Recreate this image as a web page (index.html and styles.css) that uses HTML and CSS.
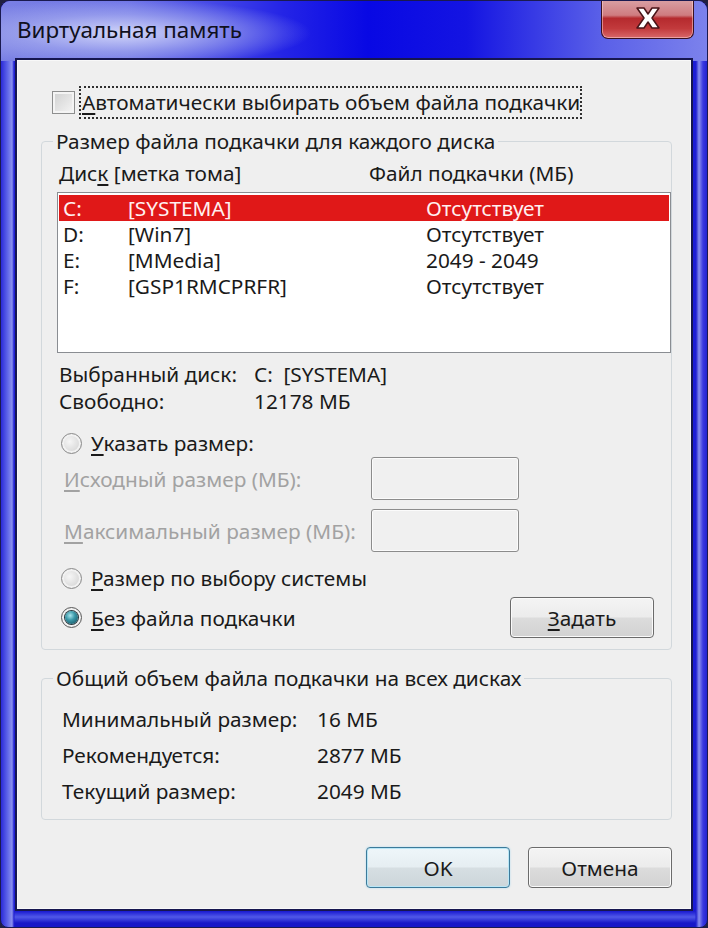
FILE: index.html
```html
<!DOCTYPE html>
<html lang="ru">
<head>
<meta charset="utf-8">
<title>Виртуальная память</title>
<link rel="stylesheet" href="styles.css">
</head>
<body>
<div class="window">
  <div class="titlebar">
    <div class="title">Виртуальная память</div>
    <div class="close">
      <svg width="30" height="24" viewBox="0 0 30 24" aria-hidden="true">
        <path d="M4 2 H11 L15 8 L19 2 H26 L19 12 L26 22 H19 L15 16 L11 22 H4 L11 12 Z" fill="#ffffff" stroke="#4a1418" stroke-width="1.5" stroke-linejoin="round"/>
      </svg>
    </div>
  </div>
  <div class="client">
    <div class="auto-row">
      <span class="checkbox"></span>
      <span class="focus"><u>А</u>втоматически выбирать объем файла подкачки</span>
    </div>

    <fieldset class="group group-disks">
      <legend>Размер файла подкачки для каждого диска</legend>
      <div class="list-head">
        <span class="col-disk">Дис<u>к</u> [метка тома]</span>
        <span class="col-file">Файл подкачки (МБ)</span>
      </div>
      <div class="listbox">
        <div class="lrow selected"><span class="c1">C:</span><span class="c2">[SYSTEMA]</span><span class="c3">Отсутствует</span></div>
        <div class="lrow"><span class="c1">D:</span><span class="c2">[Win7]</span><span class="c3">Отсутствует</span></div>
        <div class="lrow"><span class="c1">E:</span><span class="c2">[MMedia]</span><span class="c3">2049 - 2049</span></div>
        <div class="lrow"><span class="c1">F:</span><span class="c2">[GSP1RMCPRFR]</span><span class="c3">Отсутствует</span></div>
      </div>
      <div class="info">
        <div class="irow"><span class="ilabel">Выбранный диск:</span><span>C:&nbsp;&nbsp;[SYSTEMA]</span></div>
        <div class="irow"><span class="ilabel">Свободно:</span><span>12178 МБ</span></div>
      </div>
      <div class="radio-row first"><span class="radio"></span><span><u>У</u>казать размер:</span></div>
      <div class="size-row s1"><span class="size-label"><u>И</u>сходный размер (МБ):</span><span class="textbox"></span></div>
      <div class="size-row s2"><span class="size-label"><u>М</u>аксимальный размер (МБ):</span><span class="textbox"></span></div>
      <div class="radio-row sys"><span class="radio"></span><span><u>Р</u>азмер по выбору системы</span></div>
      <div class="radio-row none">
        <span class="radio checked"></span><span><u>Б</u>ез файла подкачки</span>
        <span class="btn set"><u>З</u>адать</span>
      </div>
    </fieldset>

    <fieldset class="group group-total">
      <legend>Общий объем файла подкачки на всех дисках</legend>
      <div class="trow first"><span class="tlabel">Минимальный размер:</span><span>16 МБ</span></div>
      <div class="trow"><span class="tlabel">Рекомендуется:</span><span>2877 МБ</span></div>
      <div class="trow"><span class="tlabel">Текущий размер:</span><span>2049 МБ</span></div>
    </fieldset>

    <div class="buttons">
      <span class="btn ok">OK</span>
      <span class="btn">Отмена</span>
    </div>
  </div>
</div>
</body>
</html>
```
FILE: styles.css
```css
html, body {
  margin: 0;
  padding: 0;
  background: #202040;
}
body {
  width: 708px;
  height: 928px;
  overflow: hidden;
  font-family: "Noto Sans", "Open Sans", sans-serif;
  font-size: 20.8px;
  color: #1a1a1a;
}
u { text-decoration-thickness: 2px; text-underline-offset: 3px; }

.window {
  width: 708px;
  height: 928px;
  box-sizing: border-box;
  border-radius: 10px 10px 8px 8px;
  border: 1px solid #1a1a50;
  background:
    linear-gradient(to right, #2a2ad8 0px, #5a60e8 6px, #8a90ee 11px, #2020d0 13px, transparent 14px, transparent 694px, #2020d0 695px, #8a90ee 698px, #3838e0 702px, #1818c8 708px),
    linear-gradient(to bottom, transparent 0, transparent 905px, #1818d0 910px, #5058e8 916px, #1818c8 922px);
  background-color: #1c1cd8;
  display: flex;
  flex-direction: column;
  overflow: hidden;
  position: relative;
}
.window::before {
  content: "";
  position: absolute;
  left: 0; top: 0; right: 0; height: 60px;
  background:
    radial-gradient(ellipse 190px 34px at 120px 32px, rgba(214,218,250,0.95) 0%, rgba(170,176,240,0.6) 55%, rgba(120,126,235,0) 100%),
    linear-gradient(to right, #7a80e4 0%, #6c72e6 18%, #2424e6 40%, #0808e4 52%, #1414e2 66%, #5a60e8 85%, #7c82ec 100%);
  z-index: 0;
}

.titlebar {
  position: relative;
  z-index: 1;
  height: 57px;
  display: flex;
  align-items: flex-start;
  justify-content: space-between;
  padding-left: 16px;
  padding-right: 13px;
}
.title {
  font-size: 22.4px;
  line-height: 26px;
  margin-top: 16px;
  color: #101020;
}
.close {
  width: 93px;
  height: 39px;
  margin-top: -1px;
  box-sizing: border-box;
  border: 1px solid #3a1020;
  border-top: none;
  border-radius: 0 0 7px 7px;
  background: linear-gradient(to bottom, #d9a0a4 0%, #cf7c80 40%, #b52a2e 48%, #c23a3c 75%, #d8686a 100%);
  box-shadow: inset 0 0 0 1px rgba(255,220,220,0.5);
  display: flex;
  align-items: center;
  justify-content: center;
}
.close svg { display: block; margin-top: -2px; }

.client {
  position: relative;
  z-index: 1;
  margin: 0 14px 0 14px;
  height: 853px;
  box-sizing: border-box;
  border: 2px solid #161650;
  background: #efefef;
  box-shadow: inset 0 0 0 1px #f8f8f8;
  padding: 25px 21px 0 24px;
}

.auto-row {
  display: flex;
  align-items: center;
  height: 35px;
  margin-left: 11px;
}
.checkbox {
  width: 23px;
  height: 23px;
  box-sizing: border-box;
  border: 1px solid #8e8f8f;
  background: linear-gradient(135deg, #cfd0d0 0%, #e6e6e6 60%, #f6f6f6 100%);
  box-shadow: inset 0 0 0 2px #f4f4f4;
  margin-right: 4px;
}
.focus {
  border: 2px dotted #303030;
  padding: 0 0 0 1px;
  line-height: 29px;
}

.group {
  margin: 0;
  border: 1px solid #d2d8dc;
  border-radius: 4px;
  box-sizing: border-box;
  width: 631px;
  padding: 0;
}
.group legend {
  padding: 0 3px;
  line-height: 24px;
}
.group-disks {
  margin-top: 9px;
  height: 521px;
  padding: 7px 0 0 15px;
}
.group-disks legend { margin-left: -4px; }
.list-head {
  display: flex;
  line-height: 26px;
  margin-left: 2px;
}
.col-disk { width: 310px; }

.listbox {
  margin-top: 6px;
  width: 614px;
  height: 161px;
  box-sizing: border-box;
  border: 1px solid #8a8d92;
  background: #fff;
  padding: 2px 1px;
}
.lrow {
  display: flex;
  height: 26px;
  line-height: 26px;
  padding-left: 4px;
}
.lrow.selected {
  background: #e01818;
  color: #fff0f0;
}
.c1 { width: 65px; }
.c2 { width: 298px; }

.info { margin-top: 8px; margin-left: 2px; }
.irow { display: flex; line-height: 27px; }
.ilabel { width: 195px; }

.radio-row {
  display: flex;
  align-items: center;
  height: 34px;
  margin-left: 4px;
}
.radio-row.first { margin-top: 11px; }
.radio {
  width: 21px;
  height: 21px;
  box-sizing: border-box;
  border-radius: 50%;
  border: 1px solid #8b8b8b;
  background: radial-gradient(circle at 40% 40%, #f6f6f6 0%, #dcdcdc 60%, #c8c8c8 100%);
  box-shadow: inset 0 0 0 2px #f2f2f2;
  margin-right: 9px;
  position: relative;
}
.radio.checked {
  border-color: #5a5a5a;
}
.radio.checked::after {
  content: "";
  position: absolute;
  left: 3px; top: 3px;
  width: 13px; height: 13px;
  border-radius: 50%;
  background: radial-gradient(circle at 40% 35%, #a8e6ee 0%, #3a98a8 40%, #0e4452 100%);
  box-shadow: 0 0 0 1px #2a3a40;
}

.size-row {
  display: flex;
  align-items: center;
  justify-content: space-between;
  height: 43px;
  width: 455px;
  margin-left: 7px;
  color: #a2a2a2;
}
.size-row.s1 { margin-top: -3px; }
.size-row.s2 { margin-top: 9px; }
.textbox {
  width: 148px;
  height: 43px;
  box-sizing: border-box;
  border: 1px solid #8c8c8c;
  border-radius: 3px;
  background: #f0f0f0;
  box-shadow: inset 0 0 0 1px #fbfbfb;
}
.radio-row.sys { margin-top: 9px; }
.radio-row.none { height: 41px; margin-top: 2px; margin-right: 17px; }
.radio-row.none .set { margin-left: auto; }

.btn {
  display: inline-flex;
  align-items: center;
  justify-content: center;
  width: 144px;
  height: 41px;
  box-sizing: border-box;
  border: 1px solid #6b6b6b;
  border-radius: 4px;
  background: linear-gradient(to bottom, #f4f4f4 0%, #ececec 48%, #dcdcdc 52%, #d2d2d2 100%);
  box-shadow: inset 0 0 0 1px #fafafa;
  line-height: 24px;
}

.group-total {
  margin-top: 16px;
  height: 154px;
  padding: 7px 0 0 20px;
}
.group-total legend { margin-left: -9px; }
.trow { display: flex; line-height: 36px; }
.trow.first { margin-top: 4px; }
.tlabel { width: 255px; }

.buttons {
  display: flex;
  justify-content: flex-end;
  gap: 18px;
  margin-top: 27px;
  margin-right: -2px;
}
.btn.ok {
  border-color: #3c7a9a;
  box-shadow: inset 0 0 0 1px #b8e6f6, 0 0 2px #a8d8f0;
  background: linear-gradient(to bottom, #eef6fa 0%, #e6eef2 48%, #d6dee2 52%, #ccd6da 100%);
}
```
